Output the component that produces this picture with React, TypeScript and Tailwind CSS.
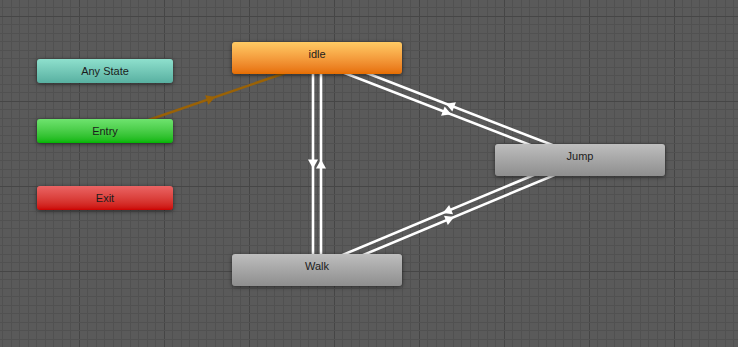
type P = [number, number];

const W = 738;
const H = 347;

const nodes = [
  { label: "Any State", x: 37, y: 59, w: 136, h: 24, cls: "bg-gradient-to-b from-[#8ee0cd] to-[#58b0a1]" },
  { label: "Entry", x: 37, y: 119, w: 136, h: 24, cls: "bg-gradient-to-b from-[#6ee36e] to-[#00b600]" },
  { label: "Exit", x: 37, y: 186, w: 136, h: 24, cls: "bg-gradient-to-b from-[#ea6464] to-[#cc0000]" },
  { label: "idle", x: 232, y: 42, w: 170, h: 32, cls: "bg-gradient-to-b from-[#ffcb64] to-[#e66e00]" },
  { label: "Jump", x: 495, y: 144, w: 170, h: 32, cls: "bg-gradient-to-b from-[#bebebe] to-[#8e8e8e]" },
  { label: "Walk", x: 232, y: 254, w: 170, h: 32, cls: "bg-gradient-to-b from-[#bebebe] to-[#8e8e8e]" },
];

const idle: P = [317, 58];
const walk: P = [317, 270];
const jump: P = [580, 160];

function Transition({ a, b, off = 4, color = "#ffffff", sw = 2.6 }: { a: P; b: P; off?: number; color?: string; sw?: number }) {
  const dx = b[0] - a[0];
  const dy = b[1] - a[1];
  const len = Math.hypot(dx, dy);
  const ux = dx / len;
  const uy = dy / len;
  // offset to the right-hand side of travel
  const px = -uy * off;
  const py = ux * off;
  const x1 = a[0] + px, y1 = a[1] + py, x2 = b[0] + px, y2 = b[1] + py;
  const mx = (x1 + x2) / 2;
  const my = (y1 + y2) / 2;
  const tip = [mx + ux * 4.5, my + uy * 4.5];
  const l = [mx - ux * 4.5 - uy * 5, my - uy * 4.5 + ux * 5];
  const r = [mx - ux * 4.5 + uy * 5, my - uy * 4.5 - ux * 5];
  return (
    <g>
      <line x1={x1} y1={y1} x2={x2} y2={y2} stroke={color} strokeWidth={sw} />
      <polygon points={`${tip[0]},${tip[1]} ${l[0]},${l[1]} ${r[0]},${r[1]}`} fill={color} />
    </g>
  );
}

function Grid() {
  const vx = Array.from({ length: 88 }, (_, k) => 2.5 + 8.5 * k);
  const hy = Array.from({ length: 42 }, (_, k) => -1 + 8.5 * k);
  return (
    <g>
      {vx.map((x, k) => (
        <rect key={"v" + k} x={Math.floor(x)} y={0} width={1} height={H} fill={(k - 9) % 10 === 0 ? "#464646" : "#515151"} />
      ))}
      {hy.map((y, k) => (
        <rect key={"h" + k} x={0} y={Math.floor(y)} width={W} height={1} fill={(k - 2) % 10 === 0 ? "#464646" : "#515151"} />
      ))}
    </g>
  );
}

export default function App() {
  return (
    <div className="relative w-[738px] h-[347px] overflow-hidden bg-[#5a5a5a] font-['Liberation_Sans',Arial,sans-serif]">
      <svg className="absolute inset-0" width={W} height={H}>
        <Grid />
        <Transition a={[105, 135]} b={[317, 62]} off={0} color="#9a6206" sw={2.5} />
        <Transition a={idle} b={walk} />
        <Transition a={walk} b={idle} />
        <Transition a={idle} b={jump} />
        <Transition a={jump} b={idle} />
        <Transition a={walk} b={jump} />
        <Transition a={jump} b={walk} />
      </svg>
      {nodes.map(n => (
        <div
          key={n.label}
          className={`absolute rounded-[3px] flex justify-center pt-[6px] text-[11px] leading-[13px] text-[#1c1c1c] shadow-[0_1px_4px_rgba(0,0,0,0.55)] ${n.cls}`}
          style={{ left: n.x, top: n.y, width: n.w, height: n.h }}
        >
          {n.label}
        </div>
      ))}
    </div>
  );
}
